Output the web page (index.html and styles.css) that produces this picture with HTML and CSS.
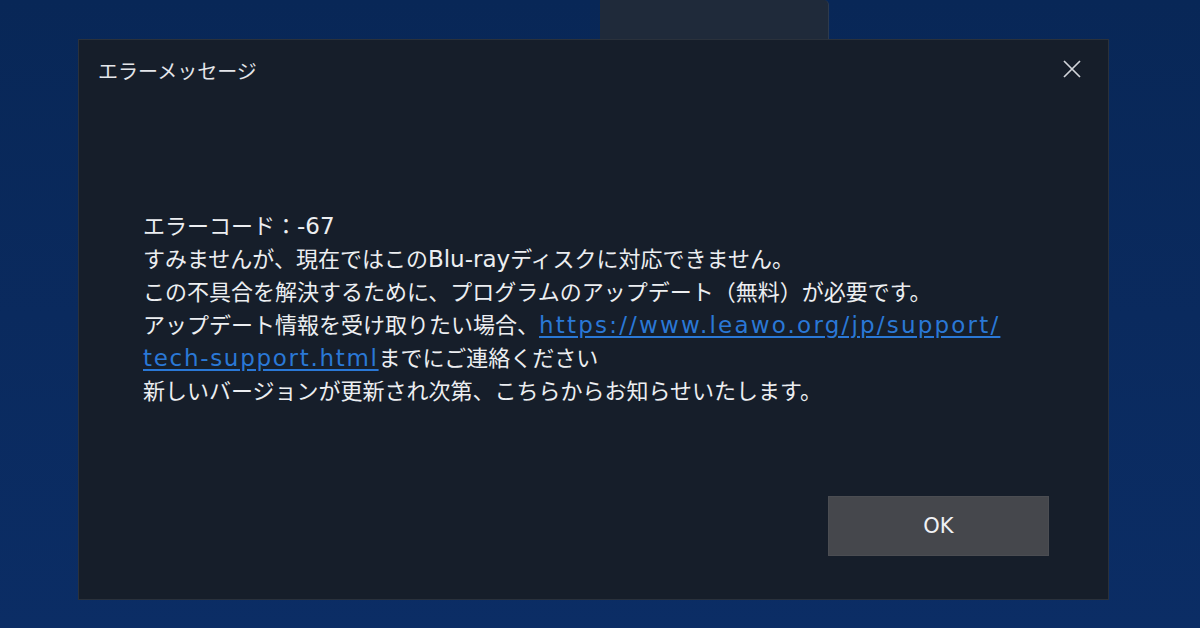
FILE: index.html
```html
<!DOCTYPE html>
<html lang="ja">
<head>
<meta charset="utf-8">
<title>エラーメッセージ</title>
<link rel="stylesheet" href="styles.css">
</head>
<body>
<div class="desk">
  <div class="topbar"><div class="tab"></div></div>
  <div class="dialog">
    <div class="head">
      <span class="title">エラーメッセージ</span>
      <svg class="close" width="18" height="18" viewBox="0 0 18 18"><path d="M1 1L17 17M17 1L1 17" stroke="#d2d5da" stroke-width="1.7" fill="none"/></svg>
    </div>
    <div class="body">
      <p class="line">エラーコード：<span class="lat">-67</span></p>
      <p class="line">すみませんが、現在ではこの<span class="lat">Blu-ray</span>ディスクに対応できません。</p>
      <p class="line">この不具合を解決するために、プログラムのアップデート（無料）が必要です。</p>
      <p class="line">アップデート情報を受け取りたい場合、<a class="lat link url" href="#">https://www.leawo.org/jp/support/</a></p>
      <p class="line"><a class="lat link" href="#">tech-support.html</a>までにご連絡ください</p>
      <p class="line">新しいバージョンが更新され次第、こちらからお知らせいたします。</p>
    </div>
    <div class="foot"><button class="ok">OK</button></div>
  </div>
</div>
</body>
</html>
```

FILE: styles.css
```css
html, body {
  margin: 0;
  padding: 0;
}
body {
  width: 1200px;
  height: 628px;
  overflow: hidden;
  background: linear-gradient(180deg, #082757 0%, #0a2a5e 50%, #0b2d65 100%);
  font-family: "Noto Sans CJK JP", "DejaVu Sans", sans-serif;
}
.desk {
  display: flex;
  flex-direction: column;
}
.topbar {
  height: 39px;
  display: flex;
}
.tab {
  margin-left: 600px;
  width: 228px;
  height: 39px;
  background: #1f2a3a;
  border-right: 1px solid #2d3a4d;
  border-top-right-radius: 5px;
}
.dialog {
  margin-left: 78px;
  width: 1031px;
  height: 561px;
  box-sizing: border-box;
  background: #161e2a;
  border: 1px solid #2a313b;
  display: flex;
  flex-direction: column;
}
.head {
  height: 61px;
  display: flex;
  align-items: center;
  justify-content: space-between;
  padding: 0 27px 0 19px;
}
.title {
  color: #e4e6ea;
  font-size: 20px;
  line-height: 24px;
}
.close {
  display: block;
  margin-top: -4px;
}
.body {
  padding: 107px 0 0 64px;
}
.line {
  margin: 0;
  color: #eceef1;
  font-size: 22px;
  line-height: 33px;
  height: 33px;
  white-space: nowrap;
}
.lat {
  font-family: "DejaVu Sans", sans-serif;
  font-size: 23px;
  line-height: 20px;
}
.link {
  color: #2a78d6;
  text-decoration: underline;
  text-underline-offset: 3px;
  letter-spacing: 1.7px;
}
.url {
  letter-spacing: 2.2px;
}
.foot {
  margin-top: auto;
  display: flex;
  justify-content: flex-end;
  padding: 0 59px 43px 0;
}
.ok {
  width: 221px;
  height: 60px;
  background: #45474c;
  border: 1px solid #4b4d52;
  color: #f0f2f4;
  font-family: "DejaVu Sans", sans-serif;
  font-size: 21px;
  padding: 0;
}
```
